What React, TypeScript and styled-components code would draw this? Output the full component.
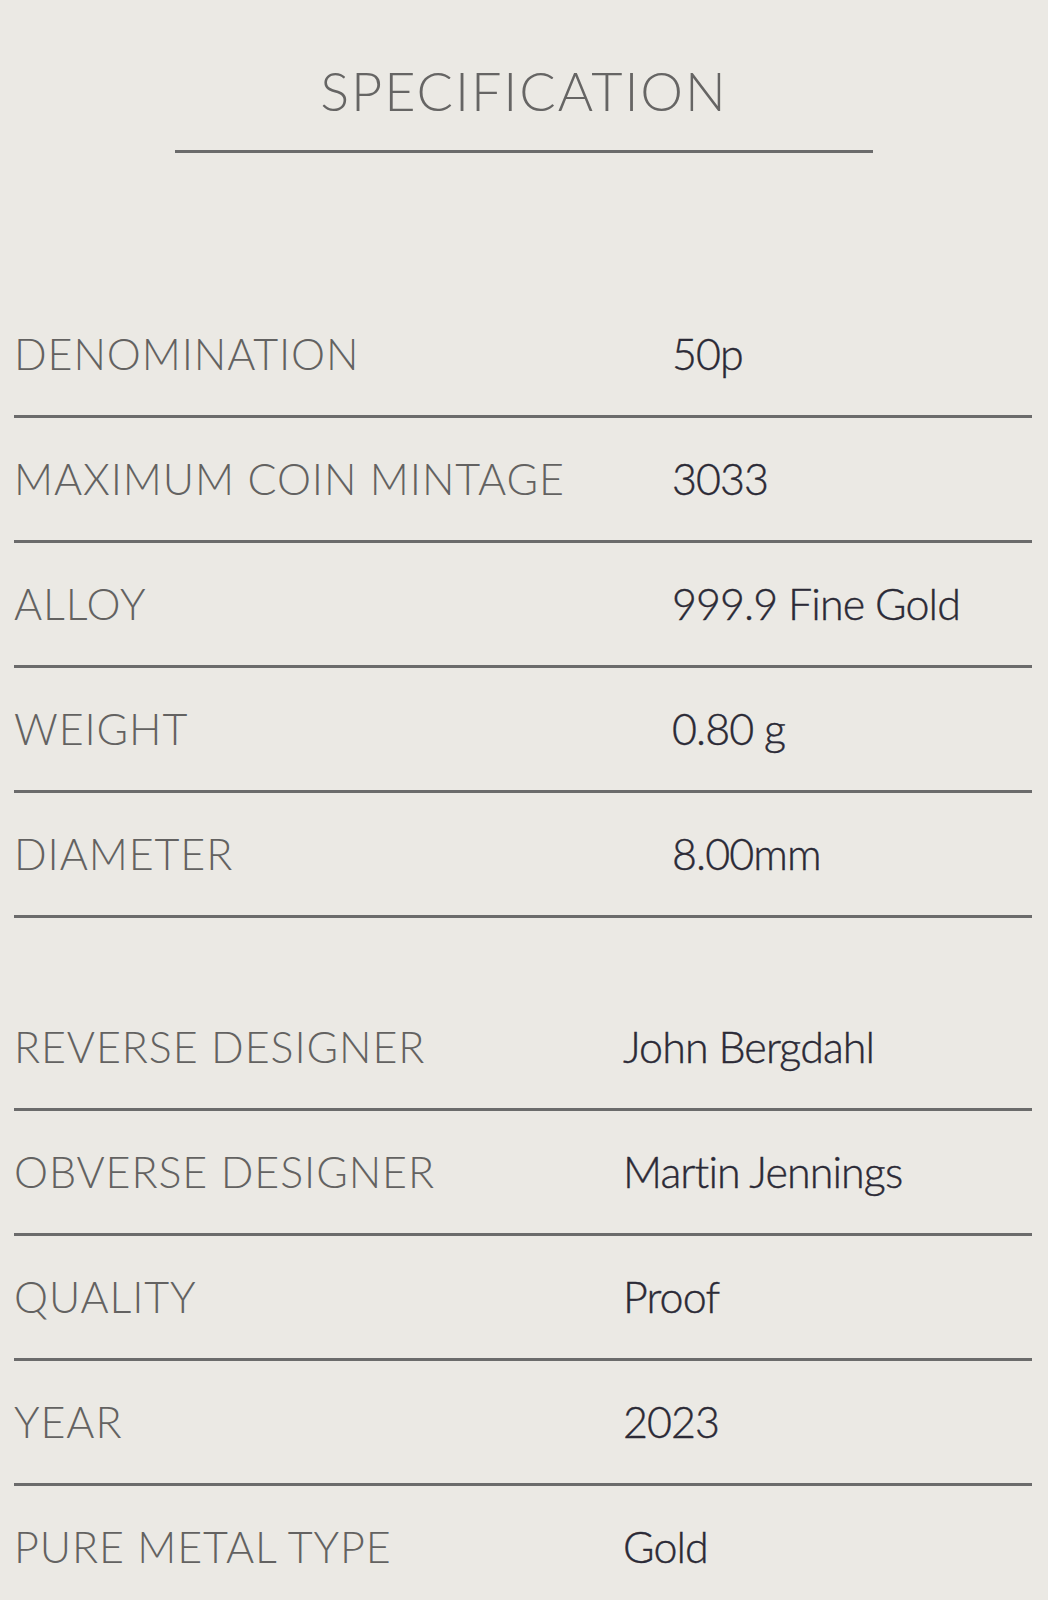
import React from "react";
import styled, { createGlobalStyle } from "styled-components";

const GlobalStyle = createGlobalStyle`
  html, body {
    margin: 0;
    padding: 0;
    background: #ebe9e4;
  }
  body {
    font-family: Lato, "Open Sans", "Liberation Sans", sans-serif;
    -webkit-font-smoothing: antialiased;
  }
`;

const Page = styled.main`
  width: 1048px;
  min-height: 1600px;
  background: #ebe9e4;
  padding-top: 64px;
  box-sizing: border-box;
  overflow: hidden;
`;

const Header = styled.header`
  display: flex;
  flex-direction: column;
  align-items: center;
`;

const Title = styled.h1`
  margin: 0;
  font-family: Lato, "Liberation Sans", sans-serif;
  font-weight: 300;
  font-size: 54px;
  line-height: 1;
  color: #666564;
  letter-spacing: 1.9px;
`;

const Rule = styled.div`
  width: 698px;
  height: 3px;
  margin-top: 32px;
  background: #6b6b6b;
`;

const Table = styled.section<{ $top: number }>`
  margin: ${(p) => p.$top}px 16px 0 14px;
  display: flex;
  flex-direction: column;
`;

const Row = styled.div<{ $labelWidth: number; $last?: boolean }>`
  display: grid;
  grid-template-columns: ${(p) => p.$labelWidth}px 1fr;
  align-items: center;
  height: 120px;
  padding-bottom: 2px;
  box-sizing: content-box;
  border-bottom: 3px solid ${(p) => (p.$last ? "transparent" : "#6b6b6b")};
`;

const Label = styled.div`
  font-family: Lato, "Liberation Sans", sans-serif;
  font-weight: 300;
  font-size: 43px;
  line-height: 1;
  color: #636261;
  letter-spacing: 0.9px;
  white-space: nowrap;
`;

const Value = styled.div`
  font-family: Lato, "Liberation Sans", sans-serif;
  font-weight: 300;
  font-size: 43px;
  line-height: 1;
  color: #2b2a36;
  letter-spacing: -0.9px;
  white-space: nowrap;
  -webkit-text-stroke: 0.4px #2b2a36;
`;

type Spec = [string, string];

const coinSpecs: Spec[] = [
  ["DENOMINATION", "50p"],
  ["MAXIMUM COIN MINTAGE", "3033"],
  ["ALLOY", "999.9 Fine Gold"],
  ["WEIGHT", "0.80 g"],
  ["DIAMETER", "8.00mm"],
];

const designSpecs: Spec[] = [
  ["REVERSE DESIGNER", "John Bergdahl"],
  ["OBVERSE DESIGNER", "Martin Jennings"],
  ["QUALITY", "Proof"],
  ["YEAR", "2023"],
  ["PURE METAL TYPE", "Gold"],
];

export default function App() {
  return (
    <>
      <GlobalStyle />
      <Page>
        <Header>
          <Title>SPECIFICATION</Title>
          <Rule />
        </Header>
        <Table $top={140}>
          {coinSpecs.map(([k, v]) => (
            <Row key={k} $labelWidth={658}>
              <Label>{k}</Label>
              <Value>{v}</Value>
            </Row>
          ))}
        </Table>
        <Table $top={68}>
          {designSpecs.map(([k, v], i) => (
            <Row key={k} $labelWidth={609} $last={i === designSpecs.length - 1}>
              <Label>{k}</Label>
              <Value>{v}</Value>
            </Row>
          ))}
        </Table>
      </Page>
    </>
  );
}
